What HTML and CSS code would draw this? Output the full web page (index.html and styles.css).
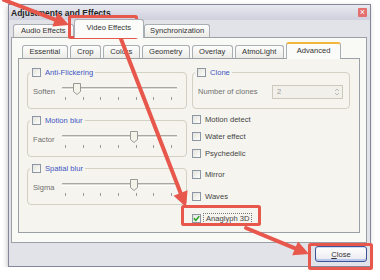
FILE: index.html
```html
<!DOCTYPE html>
<html lang="en">

<head>
    <meta charset="UTF-8">
    <title>Adjustments and Effects</title>
    <link rel="stylesheet" href="styles.css">
</head>

<body>
    <div class="window">
        <div class="titlebar">
            <span class="title">Adjustments and Effects</span>
            <span class="title-close">&#215;</span>
        </div>
        <div class="tabs outer-tabs">
            <span class="tab">Audio Effects</span>
            <span class="tab selected">Video Effects</span>
            <span class="tab">Synchronization</span>
        </div>
        <div class="pane">
            <div class="tabs inner-tabs">
                <span class="tab">Essential</span>
                <span class="tab">Crop</span>
                <span class="tab">Colors</span>
                <span class="tab">Geometry</span>
                <span class="tab">Overlay</span>
                <span class="tab">AtmoLight</span>
                <span class="tab selected">Advanced</span>
            </div>
            <div class="inner-pane">
                <div class="col">
                    <div class="group">
                        <div class="group-title"><span class="box"></span>Anti-Flickering</div>
                        <div class="row">
                            <span class="label">Soften</span>
                            <div class="slider">
                                <div class="track"></div>
                                <svg class="thumb" style="left: 11px" width="8" height="12"><path d="M0.5 0.5H7.5V8.5L4 11.5L0.5 8.5Z" /></svg>
                                <div class="ticks"><i></i><i></i><i></i><i></i><i></i><i></i><i></i></div>
                            </div>
                        </div>
                    </div>
                    <div class="group">
                        <div class="group-title"><span class="box"></span>Motion blur</div>
                        <div class="row">
                            <span class="label">Factor</span>
                            <div class="slider">
                                <div class="track"></div>
                                <svg class="thumb" style="left: 68px" width="8" height="12"><path d="M0.5 0.5H7.5V8.5L4 11.5L0.5 8.5Z" /></svg>
                                <div class="ticks"><i></i><i></i><i></i><i></i><i></i><i></i><i></i></div>
                            </div>
                        </div>
                    </div>
                    <div class="group">
                        <div class="group-title"><span class="box"></span>Spatial blur</div>
                        <div class="row">
                            <span class="label">Sigma</span>
                            <div class="slider">
                                <div class="track"></div>
                                <svg class="thumb" style="left: 68px" width="8" height="12"><path d="M0.5 0.5H7.5V8.5L4 11.5L0.5 8.5Z" /></svg>
                                <div class="ticks"><i></i><i></i><i></i><i></i><i></i><i></i><i></i></div>
                            </div>
                        </div>
                    </div>
                </div>
                <div class="col">
                    <div class="group">
                        <div class="group-title"><span class="box"></span>Clone</div>
                        <div class="row">
                            <span class="label wide">Number of clones</span>
                            <div class="spin">
                                <span>2</span>
                                <svg width="6" height="10"><path d="M1 4L3 2L5 4M1 6L3 8L5 6" /></svg>
                            </div>
                        </div>
                    </div>
                    <div class="checks">
                        <div class="check"><span class="box"></span>Motion detect</div>
                        <div class="check"><span class="box"></span>Water effect</div>
                        <div class="check"><span class="box"></span>Psychedelic</div>
                    </div>
                    <div class="checks spaced">
                        <div class="check"><span class="box"></span>Mirror</div>
                        <div class="check"><span class="box"></span>Waves</div>
                        <div class="check"><span class="box checked"><svg width="7" height="7"><path d="M0.8 3.4L2.8 5.4L6.2 1.2" /></svg></span><span class="focus">Anaglyph 3D</span></div>
                    </div>
                </div>
            </div>
        </div>
        <div class="footer">
            <button class="btn"><u>C</u>lose</button>
        </div>
    </div>

    <svg class="notes" width="380" height="280">
        <rect x="69.5" y="16.5" width="67" height="21" rx="1" />
        <rect x="182.5" y="206.5" width="77" height="18" rx="1" />
        <rect x="309.5" y="244.5" width="62" height="24" rx="1" />
        <line x1="4" y1="0" x2="55" y2="19.6" />
        <polygon points="69,25 52.3,26.6 57.7,12.6" />
        <line x1="121" y1="39" x2="180.6" y2="193" />
        <polygon points="186,207 173.6,195.7 187.6,190.3" />
        <line x1="246" y1="228" x2="295.1" y2="248.3" />
        <polygon points="309,254 292.2,255.2 298,241.4" />
    </svg>
</body>

</html>
```

FILE: styles.css
```css
* {
    margin: 0;
    padding: 0;
    box-sizing: border-box;
}
body {
    background: #fff;
    font-family: "Liberation Sans", Arial, sans-serif;
    font-size: 7.6px;
    color: #444;
}
.window {
    margin: 4px 0 0 8px;
    width: 363px;
    height: 263px;
    border: 1px solid #86869a;
    background: #e2e2e9;
    box-shadow: -1px 2px 5px rgba(0, 0, 0, 0.22);
    display: flex;
    flex-direction: column;
}
.titlebar {
    height: 15px;
    padding: 0 3px 0 2px;
    display: flex;
    align-items: center;
    justify-content: space-between;
    background: linear-gradient(#e9e9f0, #cfcfdd);
}
.title {
    font-size: 8.5px;
    font-weight: bold;
    color: #222;
}
.title-close {
    width: 9px;
    height: 9px;
    border-radius: 1px;
    background: #e46f6f;
    color: #fff;
    font-size: 9px;
    line-height: 8px;
    text-align: center;
}
.tabs {
    display: flex;
    align-items: flex-end;
}
.tab {
    height: 13px;
    line-height: 12px;
    border: 1px solid #a9adb4;
    border-bottom: none;
    border-radius: 3px 3px 0 0;
    background: linear-gradient(#fdfdfd, #ecebe6);
    color: #333;
    white-space: nowrap;
}
.tab.selected {
    position: relative;
    z-index: 1;
    margin-bottom: -1px;
    background: #fbfbf9;
}
.outer-tabs {
    height: 17px;
    padding-left: 4px;
}
.outer-tabs .tab {
    padding: 0 7px;
}
.outer-tabs .tab:last-child {
    padding: 0 5px;
}
.outer-tabs .tab.selected {
    height: 19px;
    padding: 0 12px;
    line-height: 16px;
}
.pane {
    height: 206px;
    margin: 0 3px 0 2px;
    padding: 4px 6px 9px 6px;
    border: 1px solid #9aa0a6;
    background: #f9f9f6;
    display: flex;
    flex-direction: column;
}
.inner-tabs {
    height: 16px;
    gap: 2px;
    padding-left: 4px;
}
.inner-tabs .tab {
    padding: 0 6.4px;
}
.inner-tabs .tab.selected {
    height: 17px;
    padding: 0 10px;
    line-height: 14px;
    border-top: 2px solid #f2b63c;
}
.inner-pane {
    flex: 1;
    border: 1px solid #9aa0a6;
    background: #f5f4ee;
    padding: 13px 9px 0 8px;
    display: grid;
    grid-template-columns: 160px 158px;
    column-gap: 5px;
    align-content: start;
}
.group {
    border: 1px solid #d3d1c3;
    border-radius: 4px;
    height: 37px;
    margin-bottom: 11px;
    padding: 0 9px 0 5px;
}
.group-title {
    display: flex;
    align-items: center;
    gap: 4px;
    width: fit-content;
    height: 11px;
    margin: -6px 0 0 -3px;
    padding: 0 2px;
    background: #f5f4ee;
    color: #3f55c4;
}
.box {
    width: 9px;
    height: 9px;
    border: 1px solid #8d97a3;
    background: linear-gradient(135deg, #e4e3dc, #fdfdfb);
    display: flex;
    align-items: center;
    justify-content: center;
}
.box path {
    fill: none;
    stroke: #2aa52a;
    stroke-width: 1.6;
}
.row {
    height: 17px;
    margin-top: 5px;
    display: flex;
    align-items: center;
}
.label {
    flex: none;
    width: 29px;
    color: #707070;
}
.label.wide {
    width: auto;
}
.slider {
    position: relative;
    width: 115px;
    height: 17px;
}
.track {
    margin-top: 4px;
    height: 3px;
    border-top: 1px solid #a9a9a2;
    border-bottom: 1px solid #fff;
    background: #dcdbd3;
}
.thumb {
    position: absolute;
    top: 0;
}
.thumb path {
    fill: #f5f4ea;
    stroke: #959a94;
}
.ticks {
    margin: 7px 5px 0 3px;
    display: flex;
    justify-content: space-between;
}
.ticks i {
    width: 1px;
    height: 3px;
    background: #9b9b9b;
}
.spin {
    margin-left: auto;
    margin-right: -3px;
    width: 71px;
    height: 14px;
    border: 1px solid #cbc9bd;
    background: #f1f0ea;
    color: #9a9a9a;
    padding: 0 2px 0 4px;
    display: flex;
    align-items: center;
    justify-content: space-between;
}
.spin path {
    fill: none;
    stroke: #bdbdb8;
}
.checks {
    display: flex;
    flex-direction: column;
    gap: 4px;
    margin-top: -7px;
}
.checks.spaced {
    gap: 9px;
    margin-top: 8px;
}
.check {
    height: 13px;
    display: flex;
    align-items: center;
    gap: 4px;
}
.focus {
    border: 1px dotted #777;
    padding: 0 2px;
    margin-left: -2px;
    line-height: 9px;
}
.footer {
    flex: 1;
    padding: 3px 3px 0 0;
    display: flex;
    justify-content: flex-end;
    align-items: flex-start;
}
.btn {
    width: 52px;
    height: 16px;
    border: 1px solid #3d5597;
    border-radius: 3px;
    background: linear-gradient(#ffffff, #e9e9ef);
    box-shadow: inset 0 -2px 0 #b9c7ec, inset 0 1px 0 #cfdaf6;
    font-family: "Liberation Sans", Arial, sans-serif;
    font-size: 7.6px;
    color: #333;
}
.notes {
    position: absolute;
    left: 0;
    top: 0;
    pointer-events: none;
}
.notes rect {
    fill: none;
    stroke: #e8574c;
    stroke-width: 3;
}
.notes line {
    stroke: #e8574c;
    stroke-width: 4;
    stroke-linecap: round;
}
.notes polygon {
    fill: #e8574c;
}
```
